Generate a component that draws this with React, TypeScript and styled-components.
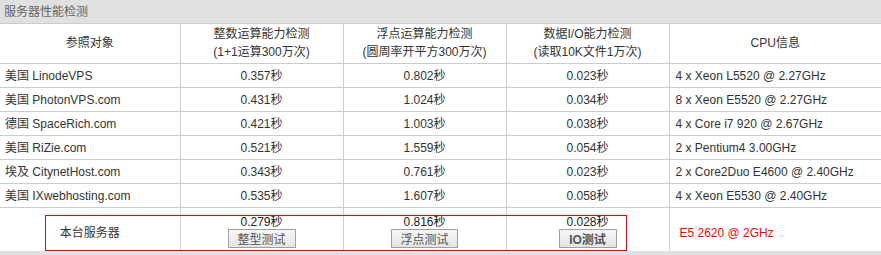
import styled, { createGlobalStyle } from "styled-components";

const GlobalStyle = createGlobalStyle`
  body {
    margin: 0;
    background: #fff;
    font-family: "Liberation Sans", "Noto Sans CJK SC", sans-serif;
    font-size: 12px;
    color: #333;
  }
`;

const Panel = styled.div`
  position: relative;
  width: 881px;
`;

const TitleBar = styled.div`
  height: 22px;
  padding: 1px 0 0 4px;
  line-height: 22px;
  background: #e0e0e0;
  color: #666;
  border-bottom: 1px solid #ccc;
`;

const Table = styled.table`
  width: 881px;
  table-layout: fixed;
  border-collapse: collapse;
`;

const Col = styled.col<{ $w: number }>`
  width: ${({ $w }) => $w}px;
`;

// heights come from padding + line-height, not from td height
const HeadCell = styled.th`
  padding: 1px 0 2px;
  font-weight: normal;
  line-height: 18px;
  text-align: center;
  vertical-align: middle;
  border-right: 1px solid #ccc;
  border-bottom: 1px solid #ccc;
  &:last-child {
    border-right: none;
  }
`;

const Cell = styled.td<{ $align?: "left" | "center" }>`
  padding: 1px 0 0 ${({ $align }) => ($align === "left" ? "6px" : "0")};
  text-align: ${({ $align }) => $align || "center"};
  line-height: 22px;
  white-space: nowrap;
  overflow: hidden;
  border-right: 1px solid #ccc;
  border-bottom: 1px solid #ccc;
  &:last-child {
    border-right: none;
  }
`;

const NameCell = styled(Cell)`
  padding-left: 5px;
  text-align: left;
`;

const LocalCell = styled.td<{ $align?: "left" | "center"; $top: number }>`
  padding: ${({ $top }) => $top}px 0 0
    ${({ $align }) => ($align === "left" ? "10px" : "0")};
  text-align: ${({ $align }) => $align || "center"};
  vertical-align: top;
  line-height: 14px;
  border-right: 1px solid #ccc;
  &:last-child {
    border-right: none;
  }
`;

const LocalText = styled.div`
  height: 24px;
`;

const Value = styled.div`
  line-height: 14px;
  color: #222;
`;

const TestButton = styled.button<{ $w: number; $bold?: boolean }>`
  display: block;
  width: ${({ $w }) => $w}px;
  height: 19px;
  margin: 0 auto 3px;
  padding: 0;
  font-family: "Liberation Sans", "Noto Sans CJK SC", sans-serif;
  font-size: 12px;
  font-weight: ${({ $bold }) => ($bold ? "bold" : "normal")};
  color: #555;
  background: linear-gradient(#f6f6f6, #e4e4e4);
  border: 1px solid #a0a0a0;
  border-radius: 0;
`;

const CpuRed = styled.span`
  color: #f00;
`;

const Highlight = styled.div`
  position: absolute;
  left: 45px;
  top: 215px;
  width: 580px;
  height: 34px;
  border: 1px solid #e00;
  pointer-events: none;
`;

const Footer = styled.div`
  height: 4px;
  background: #e0e0e0;
`;

const rows = [
  ["美国 LinodeVPS", "0.357秒", "0.802秒", "0.023秒", "4 x Xeon L5520 @ 2.27GHz"],
  ["美国 PhotonVPS.com", "0.431秒", "1.024秒", "0.034秒", "8 x Xeon E5520 @ 2.27GHz"],
  ["德国 SpaceRich.com", "0.421秒", "1.003秒", "0.038秒", "4 x Core i7 920 @ 2.67GHz"],
  ["美国 RiZie.com", "0.521秒", "1.559秒", "0.054秒", "2 x Pentium4 3.00GHz"],
  ["埃及 CitynetHost.com", "0.343秒", "0.761秒", "0.023秒", "2 x Core2Duo E4600 @ 2.40GHz"],
  ["美国 IXwebhosting.com", "0.535秒", "1.607秒", "0.058秒", "4 x Xeon E5530 @ 2.40GHz"],
];

export default function App() {
  return (
    <>
      <GlobalStyle />
      <Panel>
        <TitleBar>服务器性能检测</TitleBar>
        <Table>
          <colgroup>
            <Col $w={180} />
            <Col $w={163} />
            <Col $w={163} />
            <Col $w={163} />
            <Col $w={212} />
          </colgroup>
          <thead>
            <tr>
              <HeadCell>参照对象</HeadCell>
              <HeadCell>
                整数运算能力检测
                <br />
                (1+1运算300万次)
              </HeadCell>
              <HeadCell>
                浮点运算能力检测
                <br />
                (圆周率开平方300万次)
              </HeadCell>
              <HeadCell>
                数据I/O能力检测
                <br />
                (读取10K文件1万次)
              </HeadCell>
              <HeadCell>CPU信息</HeadCell>
            </tr>
          </thead>
          <tbody>
            {rows.map((r) => (
              <tr key={r[0]}>
                <NameCell>{r[0]}</NameCell>
                <Cell>{r[1]}</Cell>
                <Cell>{r[2]}</Cell>
                <Cell>{r[3]}</Cell>
                <Cell $align="left">{r[4]}</Cell>
              </tr>
            ))}
            <tr>
              <LocalCell $top={18}>
                <LocalText>本台服务器</LocalText>
              </LocalCell>
              <LocalCell $top={7}>
                <Value>0.279秒</Value>
                <TestButton $w={68}>整型测试</TestButton>
              </LocalCell>
              <LocalCell $top={7}>
                <Value>0.816秒</Value>
                <TestButton $w={67}>浮点测试</TestButton>
              </LocalCell>
              <LocalCell $top={7}>
                <Value>0.028秒</Value>
                <TestButton $w={58} $bold>
                  IO测试
                </TestButton>
              </LocalCell>
              <LocalCell $top={18} $align="left">
                <LocalText>
                  <CpuRed>E5 2620 @ 2GHz</CpuRed>
                </LocalText>
              </LocalCell>
            </tr>
          </tbody>
        </Table>
        <Footer />
        <Highlight />
      </Panel>
    </>
  );
}
